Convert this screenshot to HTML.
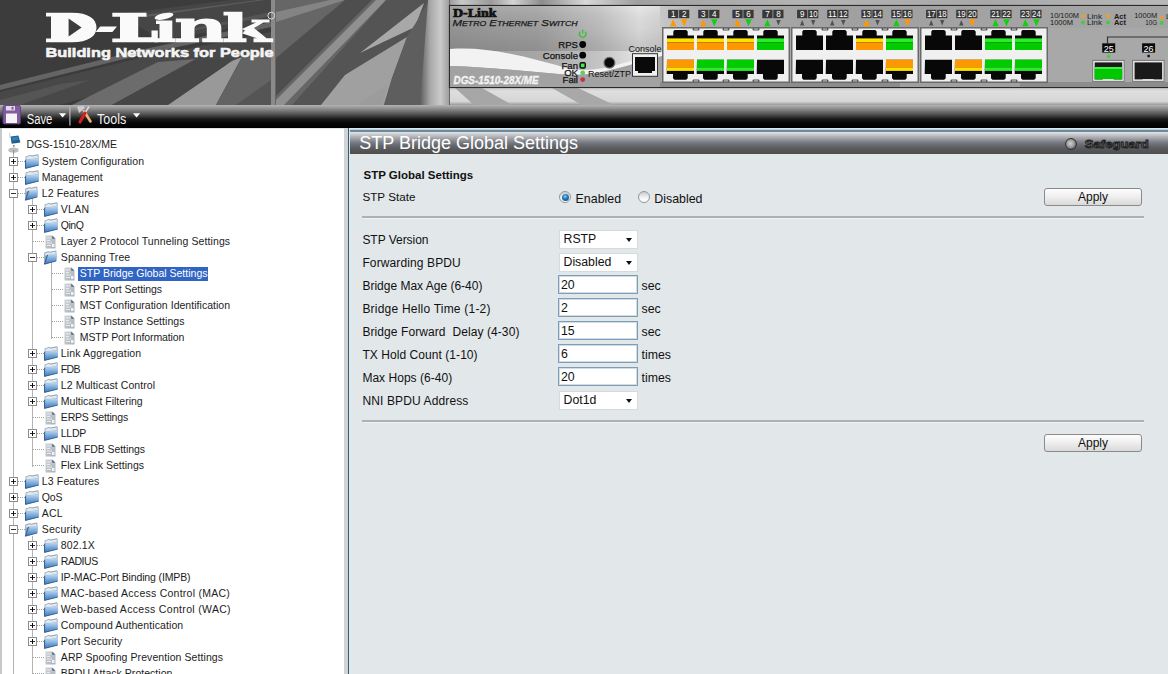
<!DOCTYPE html><html><head><meta charset="utf-8"><style>
*{box-sizing:border-box}
html,body{margin:0;padding:0;width:1168px;height:674px;overflow:hidden;background:#fff;font-family:"Liberation Sans",sans-serif}
.abs{position:absolute}
.t{position:absolute;white-space:nowrap}
#hdr{position:absolute;left:0;top:0;width:1168px;height:105px;background:#4a4a4a;overflow:hidden}
#tb{position:absolute;left:0;top:105px;width:1168px;height:23px;background:linear-gradient(#b4b4b4 0,#8a8a8a 4px,#555 9px,#1a1a1a 14px,#060606 18px,#000 23px)}
#tree{position:absolute;left:0;top:128px;width:344px;height:546px;background:#fff;overflow:hidden}
#gap{position:absolute;left:344px;top:128px;width:4px;height:546px;background:#cfd4d4}
#cont{position:absolute;left:348px;top:128px;width:820px;height:546px;background:#e2e7ea}
.lbl{font-size:12px;line-height:12px;color:#222}
.sel{position:absolute;width:79px;height:19px;background:#fff;border:1px solid #d6dadd;font-size:12.3px;line-height:17px;padding-left:4px;color:#111}
.sel:after{content:"";position:absolute;left:66.5px;top:7.5px;border-left:3.5px solid transparent;border-right:3.5px solid transparent;border-top:4.5px solid #111}
.inp{position:absolute;width:80px;height:19px;background:#fff;border:1px solid #7f9db5;box-shadow:inset 0 0 0 1px #cfdde8;font-size:12.3px;line-height:17px;padding-left:2px;padding-top:1px;color:#111}
.btn{position:absolute;width:98px;height:18px;border:1px solid #8a8a8a;border-radius:3px;background:linear-gradient(#fdfdfd 0,#f0f0f0 45%,#d9d9d9 100%);font-size:12px;line-height:16px;text-align:center;color:#111}
.hr{position:absolute;left:14px;width:782px;height:3px;background:#a9b2b4;border-bottom:1px solid #eef2f3}
.unit{font-size:12.3px;line-height:12px;color:#222}
.tr{font-size:10.5px;line-height:11px;color:#1c1c1c}
</style></head><body>
<div id="hdr"><svg width="1168" height="105" viewBox="0 0 1168 105" style="position:absolute;left:0;top:0"><defs><linearGradient id="pbg" x1="449" y1="0" x2="670" y2="0" gradientUnits="userSpaceOnUse"><stop offset="0" stop-color="#9c9c9c"/><stop offset=".4" stop-color="#a6a6a6"/><stop offset=".68" stop-color="#c4c4c4"/><stop offset=".86" stop-color="#e4e4e4"/><stop offset="1" stop-color="#d4d4d4"/></linearGradient><linearGradient id="pv" x1="0" y1="0" x2="0" y2="1"><stop offset="0" stop-color="#fff" stop-opacity=".1"/><stop offset=".5" stop-color="#000" stop-opacity=".06"/><stop offset="1" stop-color="#000" stop-opacity=".14"/></linearGradient><linearGradient id="ptop" x1="660" y1="0" x2="1050" y2="0" gradientUnits="userSpaceOnUse"><stop offset="0" stop-color="#c8c8c8"/><stop offset=".12" stop-color="#aaaaaa"/><stop offset=".5" stop-color="#a0a0a0"/><stop offset="1" stop-color="#a4a4a4"/></linearGradient><linearGradient id="below" x1="0" y1="0" x2="0" y2="1"><stop offset="0" stop-color="#c8c8c8"/><stop offset=".25" stop-color="#dedede"/><stop offset=".8" stop-color="#d6d6d6"/><stop offset="1" stop-color="#9a9a9a"/></linearGradient><linearGradient id="vband" x1="0" y1="0" x2="1" y2="0"><stop offset="0" stop-color="#5e5e5e"/><stop offset=".35" stop-color="#a8a8a8"/><stop offset=".7" stop-color="#cacaca"/><stop offset="1" stop-color="#a0a0a0"/></linearGradient><linearGradient id="topstrip" x1="440" y1="0" x2="1168" y2="0" gradientUnits="userSpaceOnUse"><stop offset="0" stop-color="#7a7a7a"/><stop offset=".03" stop-color="#c8c8c8"/><stop offset=".07" stop-color="#9a9a9a"/><stop offset=".1" stop-color="#d4d4d4"/><stop offset=".14" stop-color="#8c8c8c"/><stop offset=".2" stop-color="#d8d8d8"/><stop offset=".27" stop-color="#a0a0a0"/><stop offset=".5" stop-color="#b4b4b4"/><stop offset=".75" stop-color="#a8a8a8"/><stop offset="1" stop-color="#b8b8b8"/></linearGradient></defs><rect x="0" y="0" width="1168" height="105" fill="#3c3c3c"/><polygon points="120,14 230,0 271,0 271,22 160,40" fill="#464646"/><polygon points="144,15 257,0 265,0 146,17" fill="#5c5c5c"/><polygon points="180,31 271,12 271,16 182,33" fill="#555"/><polygon points="0,92 140,58 271,32 271,56 140,82 60,105 0,105" fill="#484848"/><polygon points="0,85 140,50 271,22 271,27 140,55 0,90" fill="#646464"/><polygon points="0,100 60,84 90,80 20,105 0,105" fill="#555"/><polygon points="72,105 158,62 196,59 112,105" fill="#6c6c6c"/><polygon points="112,105 196,59 232,60 168,105" fill="#464646"/><polygon points="168,105 232,61 242,57 216,105" fill="#999"/><polygon points="216,105 242,57 271,49 271,105" fill="#636363"/><polygon points="236,105 271,80 271,105" fill="#555"/><rect x="274" y="0" width="176" height="105" fill="#666"/><polygon points="276,12 330,0 345,0 276,22" fill="#848484"/><polygon points="276,58 345,0 372,0 276,96" fill="#4e4e4e"/><polygon points="276,100 376,0 386,0 284,105 276,105" fill="#909090"/><polygon points="292,105 386,0 430,0 407,37 345,75 321,105" fill="#545454"/><polygon points="360,53 424,3 415,27" fill="#a8a8a8"/><polygon points="321,105 345,75 407,37 392,78 384,105" fill="#a0a0a0"/><polygon points="357,105 388,84 382,105" fill="#9c9c9c"/><polygon points="407,37 430,0 436,0 432,105 384,105 392,78" fill="#5e5e5e"/><polygon points="428,0 449,0 449,105 420,105" fill="url(#vband)"/><rect x="271" y="0" width="4" height="105" fill="#8a8a8a"/><rect x="450" y="0" width="718" height="6" fill="url(#topstrip)"/><rect x="450" y="87" width="718" height="18" fill="url(#below)"/><polygon points="455,88 482,88 512,105 474,105" fill="#a6a6a6"/><polygon points="552,88 578,88 614,105 582,105" fill="#a8a8a8"/><g fill="#fafafa"><path fill-rule="evenodd" d="M46,12.8 H72 C88.5,12.8 96.5,19 96.5,27.5 C96.5,36 88.5,42.3 72,42.3 H46 V38.6 H51 V16.6 H46 Z M68.6,18.6 L81.6,27.5 L68.6,36.4 Z"/><polygon points="95.6,31.9 100.2,26.6 117,26.6 112.4,31.9"/><path d="M112.3,12.8 H146.5 V16.7 H138.2 V37.3 H151.5 V30.6 H157.8 V42.3 H112.3 V38.5 H120 V16.7 H112.3 Z"/><ellipse cx="164" cy="16.3" rx="9.6" ry="3.1" transform="rotate(-12 164 16.3)"/><path d="M156,20.6 H172.3 V38.2 H175.6 V42.3 H154.5 V38.2 H159.5 V24 H156 Z"/><path d="M175.8,18.4 H194.5 V21.4 C197.5,19.3 201.5,18.4 206.5,18.4 C216,18.4 221.3,21.5 221.3,27.5 V38.2 H223.5 V42.3 H202.2 V38.2 H206.8 V28.4 C206.8,25.3 205,23.8 202,23.8 C198,23.8 194.5,25.5 194.5,28.6 V38.2 H199 V42.3 H175.6 V38.2 H181 V22.2 H175.8 Z"/><path d="M223.5,11.7 H242.4 V38.2 H246.5 V42.3 H223.5 V38.2 H228 V15.6 H223.5 Z"/><polygon points="242,29 256,22.6 251.5,22.6 251.5,19.5 269.5,19.5 269.5,22.6 263.5,22.6 247.5,31.5"/><polygon points="245.5,30 252.5,26.8 266.5,38.2 273.2,38.2 273.2,42.3 253.5,42.3 253.5,38.2 257,38.2 242.4,33.5"/></g><text x="45.5" y="56.8" font-family="Liberation Sans" font-weight="bold" font-size="13.5" fill="#f4f4f4" stroke="#f4f4f4" stroke-width=".6" textLength="228" lengthAdjust="spacingAndGlyphs">Building Networks for People</text><circle cx="271.3" cy="15.6" r="3.4" fill="none" stroke="#d8d8d8" stroke-width="1"/><rect x="449.5" y="5.5" width="730" height="82" fill="#a8a8a8" stroke="#2a2a2a" stroke-width="1.2"/><rect x="450" y="6" width="212" height="81" fill="url(#pbg)"/><rect x="450" y="6" width="212" height="45" fill="url(#pv)"/><path d="M450,49 C490,46 530,58 570,69 C600,74 630,60 662,52 L662,56 C630,64 600,76 570,75 C530,72 490,67 450,66 Z" fill="#f2f2f2"/><path d="M450,66 C490,67 530,72 570,75 C600,76 630,64 662,56 L662,87 L450,87 Z" fill="#a2a2a2"/><rect x="660" y="6" width="520" height="22" fill="url(#ptop)"/><rect x="660" y="82" width="520" height="5" fill="#8c8c8c"/><rect x="900" y="82" width="120" height="5" fill="#a8a8a8" opacity=".7"/><text x="453" y="17" font-family="Liberation Serif" font-weight="bold" font-size="11.5" fill="#111" stroke="#111" stroke-width=".7" textLength="43.5" lengthAdjust="spacingAndGlyphs">D-Link</text><text x="452.5" y="26.4" font-family="Liberation Sans" font-style="italic" font-size="9.2" fill="#1a1a1a" stroke="#1a1a1a" stroke-width=".25" textLength="125" lengthAdjust="spacingAndGlyphs">M<tspan font-size="7">ETRO</tspan> E<tspan font-size="7">THERNET</tspan> S<tspan font-size="7">WITCH</tspan></text><text x="453.5" y="84.4" font-family="Liberation Sans" font-style="italic" font-weight="bold" font-size="10.2" fill="#f4f4f4" stroke="#f4f4f4" stroke-width=".3" textLength="85" lengthAdjust="spacingAndGlyphs">DGS-1510-28X/ME</text><text x="578" y="47.9" font-family="Liberation Sans" font-size="9.6" fill="#111" stroke="#111" stroke-width=".25" text-anchor="end">RPS</text><text x="578" y="58.5" font-family="Liberation Sans" font-size="9.6" fill="#111" stroke="#111" stroke-width=".25" text-anchor="end">Console</text><text x="578" y="68.7" font-family="Liberation Sans" font-size="9.6" fill="#111" stroke="#111" stroke-width=".25" text-anchor="end">Fan</text><text x="578" y="75.89999999999999" font-family="Liberation Sans" font-size="9.6" fill="#111" stroke="#111" stroke-width=".25" text-anchor="end">OK</text><text x="578" y="82.89999999999999" font-family="Liberation Sans" font-size="9.6" fill="#111" stroke="#111" stroke-width=".25" text-anchor="end">Fail</text><circle cx="582.7" cy="44.5" r="3.4" fill="#050505"/><circle cx="582.7" cy="55.2" r="3.4" fill="#050505"/><rect x="579.4" y="62.1" width="6.6" height="6.6" rx="2" fill="#111"/><rect x="580.9" y="63.6" width="3.6" height="3.6" fill="#3cf03c"/><circle cx="582.7" cy="72.8" r="2.4" fill="#5cd05c"/><circle cx="582.7" cy="79.6" r="2.4" fill="#c83048"/><path d="M580.3,31.6 A3.3,3.3 0 1 0 585.1,31.6" fill="none" stroke="#3cc03c" stroke-width="1.3"/><path d="M582.7,29.4 V33.6" stroke="#3cc03c" stroke-width="1.3"/><circle cx="609.4" cy="62.7" r="5.4" fill="#0a0a0a" stroke="#6a6a6a" stroke-width="1.2"/><text x="588" y="76.5" font-family="Liberation Sans" font-size="9.5" fill="#111" textLength="43" lengthAdjust="spacingAndGlyphs">Reset/ZTP</text><text x="628.6" y="51.5" font-family="Liberation Sans" font-size="9.5" fill="#111" textLength="33" lengthAdjust="spacingAndGlyphs">Console</text><rect x="632.5" y="53.7" width="25" height="22.6" fill="#f0f0f0" stroke="#333" stroke-width="1"/><path d="M635,57 h20 v14 h-3 v2 h-14 v-2 h-3 z" fill="#0a0a0a"/><rect x="662.75" y="27.75" width="126.5" height="54.5" fill="#f0f0f0" stroke="#6a6a6a" stroke-width="1.5"/><path d="M674.5,29.9 h11.7 l1.5,1.5 v4.1 h6.3 v14.5 h-27 v-14.5 h6.3 v-4.1 z" fill="#080808"/><rect x="667" y="38.4" width="27" height="4" fill="#ffe200"/><rect x="667" y="42.4" width="27" height="7.6" fill="#ff9800"/><path d="M667,59.7 h27 v14.3 h-6.3 v4.3 l-1.5,1.5 h-11.7 l-1.5,-1.5 v-4.3 h-6.3 z" fill="#080808"/><rect x="667" y="59.7" width="27" height="7.6" fill="#ff9800"/><rect x="667" y="67.3" width="27" height="3.6" fill="#ffe200"/><rect x="692.5" y="28" width="7" height="2.4" rx="1" fill="#555"/><rect x="694" y="28.5" width="4" height="1.2" fill="#bbb"/><rect x="692.5" y="79.6" width="7" height="2.4" rx="1" fill="#555"/><rect x="694" y="80.3" width="4" height="1.2" fill="#bbb"/><rect x="668.1" y="9.8" width="10.2" height="8.4" fill="#383838"/><text x="673.2" y="17.4" font-family="Liberation Sans" font-size="9.5" fill="#fff" text-anchor="middle" textLength="4.5" lengthAdjust="spacingAndGlyphs">1</text><polygon points="670.0,26.3 676.4,26.3 673.2,19.3" fill="#ff9800"/><rect x="679.1" y="9.8" width="10.2" height="8.4" fill="#383838"/><text x="684.2" y="17.4" font-family="Liberation Sans" font-size="9.5" fill="#fff" text-anchor="middle" textLength="4.5" lengthAdjust="spacingAndGlyphs">2</text><polygon points="681.0,19.3 687.4,19.3 684.2,26.3" fill="#ff9800"/><path d="M704.5,29.9 h11.7 l1.5,1.5 v4.1 h6.3 v14.5 h-27 v-14.5 h6.3 v-4.1 z" fill="#080808"/><rect x="697" y="38.4" width="27" height="4" fill="#ffe200"/><rect x="697" y="42.4" width="27" height="7.6" fill="#ff9800"/><path d="M697,59.7 h27 v14.3 h-6.3 v4.3 l-1.5,1.5 h-11.7 l-1.5,-1.5 v-4.3 h-6.3 z" fill="#080808"/><rect x="697" y="59.7" width="27" height="7.6" fill="#00cc00"/><rect x="697" y="67.3" width="27" height="3.6" fill="#2aee2a"/><rect x="722.5" y="28" width="7" height="2.4" rx="1" fill="#555"/><rect x="724" y="28.5" width="4" height="1.2" fill="#bbb"/><rect x="722.5" y="79.6" width="7" height="2.4" rx="1" fill="#555"/><rect x="724" y="80.3" width="4" height="1.2" fill="#bbb"/><rect x="698.2" y="9.8" width="10.2" height="8.4" fill="#383838"/><text x="703.3" y="17.4" font-family="Liberation Sans" font-size="9.5" fill="#fff" text-anchor="middle" textLength="4.5" lengthAdjust="spacingAndGlyphs">3</text><polygon points="700.1,26.3 706.5,26.3 703.3,19.3" fill="#ff9800"/><rect x="709.2" y="9.8" width="10.2" height="8.4" fill="#383838"/><text x="714.3" y="17.4" font-family="Liberation Sans" font-size="9.5" fill="#fff" text-anchor="middle" textLength="4.5" lengthAdjust="spacingAndGlyphs">4</text><polygon points="711.1,19.3 717.5,19.3 714.3,26.3" fill="#10d010"/><path d="M734.5,29.9 h11.7 l1.5,1.5 v4.1 h6.3 v14.5 h-27 v-14.5 h6.3 v-4.1 z" fill="#080808"/><rect x="727" y="38.4" width="27" height="4" fill="#ffe200"/><rect x="727" y="42.4" width="27" height="7.6" fill="#ff9800"/><path d="M727,59.7 h27 v14.3 h-6.3 v4.3 l-1.5,1.5 h-11.7 l-1.5,-1.5 v-4.3 h-6.3 z" fill="#080808"/><rect x="727" y="59.7" width="27" height="7.6" fill="#00cc00"/><rect x="727" y="67.3" width="27" height="3.6" fill="#2aee2a"/><rect x="752.5" y="28" width="7" height="2.4" rx="1" fill="#555"/><rect x="754" y="28.5" width="4" height="1.2" fill="#bbb"/><rect x="752.5" y="79.6" width="7" height="2.4" rx="1" fill="#555"/><rect x="754" y="80.3" width="4" height="1.2" fill="#bbb"/><rect x="732.4" y="9.8" width="10.2" height="8.4" fill="#383838"/><text x="737.5" y="17.4" font-family="Liberation Sans" font-size="9.5" fill="#fff" text-anchor="middle" textLength="4.5" lengthAdjust="spacingAndGlyphs">5</text><polygon points="734.3,26.3 740.7,26.3 737.5,19.3" fill="#ff9800"/><rect x="743.4" y="9.8" width="10.2" height="8.4" fill="#383838"/><text x="748.5" y="17.4" font-family="Liberation Sans" font-size="9.5" fill="#fff" text-anchor="middle" textLength="4.5" lengthAdjust="spacingAndGlyphs">6</text><polygon points="745.3,19.3 751.7,19.3 748.5,26.3" fill="#10d010"/><path d="M764.5,29.9 h11.7 l1.5,1.5 v4.1 h6.3 v14.5 h-27 v-14.5 h6.3 v-4.1 z" fill="#080808"/><rect x="757" y="38.4" width="27" height="4" fill="#2aee2a"/><rect x="757" y="42.4" width="27" height="7.6" fill="#00cc00"/><path d="M757,59.7 h27 v14.3 h-6.3 v4.3 l-1.5,1.5 h-11.7 l-1.5,-1.5 v-4.3 h-6.3 z" fill="#080808"/><rect x="762.3" y="9.8" width="10.2" height="8.4" fill="#383838"/><text x="767.4" y="17.4" font-family="Liberation Sans" font-size="9.5" fill="#fff" text-anchor="middle" textLength="4.5" lengthAdjust="spacingAndGlyphs">7</text><polygon points="764.2,26.3 770.6,26.3 767.4,19.3" fill="#10d010"/><rect x="773.3" y="9.8" width="10.2" height="8.4" fill="#383838"/><text x="778.4" y="17.4" font-family="Liberation Sans" font-size="9.5" fill="#fff" text-anchor="middle" textLength="4.5" lengthAdjust="spacingAndGlyphs">8</text><polygon points="776.2,20 780.6,20 778.4,25.4" fill="#505050"/><rect x="791.75" y="27.75" width="126.5" height="54.5" fill="#f0f0f0" stroke="#6a6a6a" stroke-width="1.5"/><path d="M803.5,29.9 h11.7 l1.5,1.5 v4.1 h6.3 v14.5 h-27 v-14.5 h6.3 v-4.1 z" fill="#080808"/><path d="M796,59.7 h27 v14.3 h-6.3 v4.3 l-1.5,1.5 h-11.7 l-1.5,-1.5 v-4.3 h-6.3 z" fill="#080808"/><rect x="821.5" y="28" width="7" height="2.4" rx="1" fill="#555"/><rect x="823" y="28.5" width="4" height="1.2" fill="#bbb"/><rect x="821.5" y="79.6" width="7" height="2.4" rx="1" fill="#555"/><rect x="823" y="80.3" width="4" height="1.2" fill="#bbb"/><rect x="797.1" y="9.8" width="10.2" height="8.4" fill="#383838"/><text x="802.2" y="17.4" font-family="Liberation Sans" font-size="9.5" fill="#fff" text-anchor="middle" textLength="4.5" lengthAdjust="spacingAndGlyphs">9</text><polygon points="800.0,25.4 804.4,25.4 802.2,20" fill="#505050"/><rect x="808.1" y="9.8" width="10.2" height="8.4" fill="#383838"/><text x="813.2" y="17.4" font-family="Liberation Sans" font-size="9.5" fill="#fff" text-anchor="middle" textLength="8.6" lengthAdjust="spacingAndGlyphs">10</text><polygon points="811.0,20 815.4,20 813.2,25.4" fill="#505050"/><path d="M833.5,29.9 h11.7 l1.5,1.5 v4.1 h6.3 v14.5 h-27 v-14.5 h6.3 v-4.1 z" fill="#080808"/><path d="M826,59.7 h27 v14.3 h-6.3 v4.3 l-1.5,1.5 h-11.7 l-1.5,-1.5 v-4.3 h-6.3 z" fill="#080808"/><rect x="851.5" y="28" width="7" height="2.4" rx="1" fill="#555"/><rect x="853" y="28.5" width="4" height="1.2" fill="#bbb"/><rect x="851.5" y="79.6" width="7" height="2.4" rx="1" fill="#555"/><rect x="853" y="80.3" width="4" height="1.2" fill="#bbb"/><rect x="827.2" y="9.8" width="10.2" height="8.4" fill="#383838"/><text x="832.3" y="17.4" font-family="Liberation Sans" font-size="9.5" fill="#fff" text-anchor="middle" textLength="8.6" lengthAdjust="spacingAndGlyphs">11</text><polygon points="830.1,25.4 834.5,25.4 832.3,20" fill="#505050"/><rect x="838.2" y="9.8" width="10.2" height="8.4" fill="#383838"/><text x="843.3" y="17.4" font-family="Liberation Sans" font-size="9.5" fill="#fff" text-anchor="middle" textLength="8.6" lengthAdjust="spacingAndGlyphs">12</text><polygon points="841.1,20 845.5,20 843.3,25.4" fill="#505050"/><path d="M863.5,29.9 h11.7 l1.5,1.5 v4.1 h6.3 v14.5 h-27 v-14.5 h6.3 v-4.1 z" fill="#080808"/><rect x="856" y="38.4" width="27" height="4" fill="#ffe200"/><rect x="856" y="42.4" width="27" height="7.6" fill="#ff9800"/><path d="M856,59.7 h27 v14.3 h-6.3 v4.3 l-1.5,1.5 h-11.7 l-1.5,-1.5 v-4.3 h-6.3 z" fill="#080808"/><rect x="881.5" y="28" width="7" height="2.4" rx="1" fill="#555"/><rect x="883" y="28.5" width="4" height="1.2" fill="#bbb"/><rect x="881.5" y="79.6" width="7" height="2.4" rx="1" fill="#555"/><rect x="883" y="80.3" width="4" height="1.2" fill="#bbb"/><rect x="861.4" y="9.8" width="10.2" height="8.4" fill="#383838"/><text x="866.5" y="17.4" font-family="Liberation Sans" font-size="9.5" fill="#fff" text-anchor="middle" textLength="8.6" lengthAdjust="spacingAndGlyphs">13</text><polygon points="863.3,26.3 869.7,26.3 866.5,19.3" fill="#ff9800"/><rect x="872.4" y="9.8" width="10.2" height="8.4" fill="#383838"/><text x="877.5" y="17.4" font-family="Liberation Sans" font-size="9.5" fill="#fff" text-anchor="middle" textLength="8.6" lengthAdjust="spacingAndGlyphs">14</text><polygon points="875.3,20 879.7,20 877.5,25.4" fill="#505050"/><path d="M893.5,29.9 h11.7 l1.5,1.5 v4.1 h6.3 v14.5 h-27 v-14.5 h6.3 v-4.1 z" fill="#080808"/><rect x="886" y="38.4" width="27" height="4" fill="#2aee2a"/><rect x="886" y="42.4" width="27" height="7.6" fill="#00cc00"/><path d="M886,59.7 h27 v14.3 h-6.3 v4.3 l-1.5,1.5 h-11.7 l-1.5,-1.5 v-4.3 h-6.3 z" fill="#080808"/><rect x="886" y="59.7" width="27" height="7.6" fill="#ff9800"/><rect x="886" y="67.3" width="27" height="3.6" fill="#ffe200"/><rect x="891.3" y="9.8" width="10.2" height="8.4" fill="#383838"/><text x="896.4" y="17.4" font-family="Liberation Sans" font-size="9.5" fill="#fff" text-anchor="middle" textLength="8.6" lengthAdjust="spacingAndGlyphs">15</text><polygon points="893.2,26.3 899.6,26.3 896.4,19.3" fill="#10d010"/><rect x="902.3" y="9.8" width="10.2" height="8.4" fill="#383838"/><text x="907.4" y="17.4" font-family="Liberation Sans" font-size="9.5" fill="#fff" text-anchor="middle" textLength="8.6" lengthAdjust="spacingAndGlyphs">16</text><polygon points="904.2,19.3 910.6,19.3 907.4,26.3" fill="#ff9800"/><rect x="920.75" y="27.75" width="126.5" height="54.5" fill="#f0f0f0" stroke="#6a6a6a" stroke-width="1.5"/><path d="M932.5,29.9 h11.7 l1.5,1.5 v4.1 h6.3 v14.5 h-27 v-14.5 h6.3 v-4.1 z" fill="#080808"/><path d="M925,59.7 h27 v14.3 h-6.3 v4.3 l-1.5,1.5 h-11.7 l-1.5,-1.5 v-4.3 h-6.3 z" fill="#080808"/><rect x="950.5" y="28" width="7" height="2.4" rx="1" fill="#555"/><rect x="952" y="28.5" width="4" height="1.2" fill="#bbb"/><rect x="950.5" y="79.6" width="7" height="2.4" rx="1" fill="#555"/><rect x="952" y="80.3" width="4" height="1.2" fill="#bbb"/><rect x="926.1" y="9.8" width="10.2" height="8.4" fill="#383838"/><text x="931.2" y="17.4" font-family="Liberation Sans" font-size="9.5" fill="#fff" text-anchor="middle" textLength="8.6" lengthAdjust="spacingAndGlyphs">17</text><polygon points="929.0,25.4 933.4,25.4 931.2,20" fill="#505050"/><rect x="937.1" y="9.8" width="10.2" height="8.4" fill="#383838"/><text x="942.2" y="17.4" font-family="Liberation Sans" font-size="9.5" fill="#fff" text-anchor="middle" textLength="8.6" lengthAdjust="spacingAndGlyphs">18</text><polygon points="940.0,20 944.4,20 942.2,25.4" fill="#505050"/><path d="M962.5,29.9 h11.7 l1.5,1.5 v4.1 h6.3 v14.5 h-27 v-14.5 h6.3 v-4.1 z" fill="#080808"/><path d="M955,59.7 h27 v14.3 h-6.3 v4.3 l-1.5,1.5 h-11.7 l-1.5,-1.5 v-4.3 h-6.3 z" fill="#080808"/><rect x="955" y="59.7" width="27" height="7.6" fill="#ff9800"/><rect x="955" y="67.3" width="27" height="3.6" fill="#ffe200"/><rect x="980.5" y="28" width="7" height="2.4" rx="1" fill="#555"/><rect x="982" y="28.5" width="4" height="1.2" fill="#bbb"/><rect x="980.5" y="79.6" width="7" height="2.4" rx="1" fill="#555"/><rect x="982" y="80.3" width="4" height="1.2" fill="#bbb"/><rect x="956.2" y="9.8" width="10.2" height="8.4" fill="#383838"/><text x="961.3" y="17.4" font-family="Liberation Sans" font-size="9.5" fill="#fff" text-anchor="middle" textLength="8.6" lengthAdjust="spacingAndGlyphs">19</text><polygon points="959.1,25.4 963.5,25.4 961.3,20" fill="#505050"/><rect x="967.2" y="9.8" width="10.2" height="8.4" fill="#383838"/><text x="972.3" y="17.4" font-family="Liberation Sans" font-size="9.5" fill="#fff" text-anchor="middle" textLength="8.6" lengthAdjust="spacingAndGlyphs">20</text><polygon points="969.1,19.3 975.5,19.3 972.3,26.3" fill="#ff9800"/><path d="M992.5,29.9 h11.7 l1.5,1.5 v4.1 h6.3 v14.5 h-27 v-14.5 h6.3 v-4.1 z" fill="#080808"/><rect x="985" y="38.4" width="27" height="4" fill="#2aee2a"/><rect x="985" y="42.4" width="27" height="7.6" fill="#00cc00"/><path d="M985,59.7 h27 v14.3 h-6.3 v4.3 l-1.5,1.5 h-11.7 l-1.5,-1.5 v-4.3 h-6.3 z" fill="#080808"/><rect x="985" y="59.7" width="27" height="7.6" fill="#00cc00"/><rect x="985" y="67.3" width="27" height="3.6" fill="#2aee2a"/><rect x="1010.5" y="28" width="7" height="2.4" rx="1" fill="#555"/><rect x="1012" y="28.5" width="4" height="1.2" fill="#bbb"/><rect x="1010.5" y="79.6" width="7" height="2.4" rx="1" fill="#555"/><rect x="1012" y="80.3" width="4" height="1.2" fill="#bbb"/><rect x="990.4" y="9.8" width="10.2" height="8.4" fill="#383838"/><text x="995.5" y="17.4" font-family="Liberation Sans" font-size="9.5" fill="#fff" text-anchor="middle" textLength="8.6" lengthAdjust="spacingAndGlyphs">21</text><polygon points="992.3,26.3 998.7,26.3 995.5,19.3" fill="#10d010"/><rect x="1001.4" y="9.8" width="10.2" height="8.4" fill="#383838"/><text x="1006.5" y="17.4" font-family="Liberation Sans" font-size="9.5" fill="#fff" text-anchor="middle" textLength="8.6" lengthAdjust="spacingAndGlyphs">22</text><polygon points="1003.3,19.3 1009.7,19.3 1006.5,26.3" fill="#10d010"/><path d="M1022.5,29.9 h11.7 l1.5,1.5 v4.1 h6.3 v14.5 h-27 v-14.5 h6.3 v-4.1 z" fill="#080808"/><rect x="1015" y="38.4" width="27" height="4" fill="#2aee2a"/><rect x="1015" y="42.4" width="27" height="7.6" fill="#00cc00"/><path d="M1015,59.7 h27 v14.3 h-6.3 v4.3 l-1.5,1.5 h-11.7 l-1.5,-1.5 v-4.3 h-6.3 z" fill="#080808"/><rect x="1015" y="59.7" width="27" height="7.6" fill="#00cc00"/><rect x="1015" y="67.3" width="27" height="3.6" fill="#2aee2a"/><rect x="1020.3" y="9.8" width="10.2" height="8.4" fill="#383838"/><text x="1025.4" y="17.4" font-family="Liberation Sans" font-size="9.5" fill="#fff" text-anchor="middle" textLength="8.6" lengthAdjust="spacingAndGlyphs">23</text><polygon points="1022.2,26.3 1028.6,26.3 1025.4,19.3" fill="#10d010"/><rect x="1031.3" y="9.8" width="10.2" height="8.4" fill="#383838"/><text x="1036.4" y="17.4" font-family="Liberation Sans" font-size="9.5" fill="#fff" text-anchor="middle" textLength="8.6" lengthAdjust="spacingAndGlyphs">24</text><polygon points="1033.2,19.3 1039.6,19.3 1036.4,26.3" fill="#10d010"/><text x="1050" y="18.4" font-family="Liberation Sans" fill="#1a1a1a" lengthAdjust="spacingAndGlyphs" font-size="6.5" textLength="29">10/100M</text><text x="1050" y="24.8" font-family="Liberation Sans" fill="#1a1a1a" lengthAdjust="spacingAndGlyphs" font-size="6.5" textLength="23">1000M</text><circle cx="1083" cy="16" r="2" fill="#e8a030"/><circle cx="1083" cy="22.5" r="2" fill="#48c848"/><text x="1087" y="18.6" font-family="Liberation Sans" fill="#1a1a1a" lengthAdjust="spacingAndGlyphs" font-size="7.2" textLength="15">Link</text><text x="1087" y="25" font-family="Liberation Sans" fill="#1a1a1a" lengthAdjust="spacingAndGlyphs" font-size="7.2" textLength="15">Link</text><circle cx="1108" cy="16" r="2" fill="#e8a030"/><circle cx="1108" cy="22.5" r="2" fill="#48c848"/><text x="1114" y="18.6" font-family="Liberation Sans" fill="#1a1a1a" lengthAdjust="spacingAndGlyphs" font-size="7.2" font-weight="bold" textLength="12">Act</text><text x="1114" y="25" font-family="Liberation Sans" fill="#1a1a1a" lengthAdjust="spacingAndGlyphs" font-size="7.2" font-weight="bold" textLength="12">Act</text><text x="1134.2" y="18.3" font-family="Liberation Sans" fill="#1a1a1a" lengthAdjust="spacingAndGlyphs" font-size="6.5" textLength="23">1000M</text><text x="1145.2" y="25" font-family="Liberation Sans" fill="#1a1a1a" lengthAdjust="spacingAndGlyphs" font-size="6.5" textLength="12">10G</text><circle cx="1161.6" cy="17.6" r="2" fill="#e8a030"/><circle cx="1161.6" cy="22.9" r="2" fill="#48c848"/><text x="1166" y="19" font-family="Liberation Sans" fill="#1a1a1a" lengthAdjust="spacingAndGlyphs" font-size="7.2">L</text><path d="M1107.5,43 V37 H1168" fill="none" stroke="#333" stroke-width="1.2"/><rect x="1102.2" y="43.3" width="13" height="9.3" fill="#0a0a0a"/><text x="1108.7" y="51.6" font-family="Liberation Sans" font-size="9" fill="#fff" text-anchor="middle">25</text><circle cx="1108.7" cy="56.5" r="1.8" fill="#40d040"/><rect x="1092.7" y="60.4" width="31.5" height="21" fill="#e8e8e8" stroke="#777" stroke-width="1"/><rect x="1094.7" y="62.4" width="27.5" height="17" fill="#1a1a1a"/><rect x="1094.7" y="67" width="27.5" height="2" fill="#40f040"/><rect x="1094.7" y="69" width="27.5" height="10.4" fill="#00c800"/><rect x="1102.7" y="79" width="11" height="1.5" fill="#ddd"/><rect x="1142.1" y="43.3" width="13" height="9.3" fill="#0a0a0a"/><text x="1148.6" y="51.6" font-family="Liberation Sans" font-size="9" fill="#fff" text-anchor="middle">26</text><rect x="1147.3999999999999" y="54.8" width="2.4" height="2.4" fill="#111"/><rect x="1132.6" y="60.4" width="31.5" height="21" fill="#e8e8e8" stroke="#777" stroke-width="1"/><rect x="1134.6" y="62.4" width="27.5" height="17" fill="#1a1a1a"/><rect x="1142.6" y="79" width="11" height="1.5" fill="#ddd"/></svg></div>
<div id="tb"><svg width="200" height="23" style="position:absolute;left:0;top:0"><rect x="3" y="0.5" width="17.5" height="18.5" rx="1.5" fill="#7e5c9e" stroke="#5a3c78" stroke-width=".8"/><rect x="6" y="1" width="9" height="4.5" fill="#e6d8f0"/><rect x="11.5" y="1.8" width="2" height="2.8" fill="#7e5c9e"/><rect x="6" y="8.5" width="11" height="9.5" fill="#f6f2f8"/><text x="26.7" y="18.6" font-family="Liberation Sans" font-size="13.8" fill="#f4f4f4" textLength="25.7" lengthAdjust="spacingAndGlyphs">Save</text><polygon points="59,8.3 66.2,8.3 62.6,12.4" fill="#fff"/><rect x="69.3" y="2" width="1.2" height="18.6" fill="#b8b8b8"/><path d="M77,1.5 L83.5,0.8 L85,3 L79,8 Z" fill="#c8ccd8"/><path d="M84,6 L90.5,16.5" stroke="#e8b878" stroke-width="2.6" stroke-linecap="round"/><path d="M89,1.5 L85,8" stroke="#d8d8e0" stroke-width="1.6"/><path d="M85,8 L80,17" stroke="#d42020" stroke-width="3" stroke-linecap="round"/><text x="97" y="18.8" font-family="Liberation Sans" font-size="13.8" fill="#f4f4f4" textLength="29.2" lengthAdjust="spacingAndGlyphs">Tools</text><polygon points="133,8.3 140.2,8.3 136.6,12.6" fill="#fff"/></svg></div>
<svg width="0" height="0" style="position:absolute"><defs><linearGradient id="gf" x1="0" y1="0" x2="0" y2="1"><stop offset="0" stop-color="#c4daf0"/><stop offset=".45" stop-color="#7eaede"/><stop offset="1" stop-color="#3d72b0"/></linearGradient><linearGradient id="gb" x1="0" y1="0" x2="0" y2="1"><stop offset="0" stop-color="#8a9cac"/><stop offset="1" stop-color="#c8d4de"/></linearGradient><linearGradient id="gd" x1="0" y1="0" x2="1" y2="1"><stop offset="0" stop-color="#d0d4d8"/><stop offset="1" stop-color="#a8b0b8"/></linearGradient><g id="fc"><path d="M0.6,2.4 L5,0.9 L7.2,1.5 L12.8,0.2 L13.6,0.9 L13.6,11.2 L0.6,14.6 Z" fill="#8ea2b6"/><path d="M1.4,2.9 L5,1.8 L7.2,2.4 L12.8,1.2 L12.8,4.2 L1.4,5.5 Z" fill="#dfe8f0"/><path d="M0.6,5.8 L13.6,4.3 L13.6,11.2 L0.6,14.6 Z" fill="url(#gf)"/><path d="M0.6,5.8 L0.6,14.6" stroke="#2e5c90" stroke-width="1"/><path d="M0.6,14.4 L13.6,11.1" stroke="#2e5c90" stroke-width=".8"/></g><g id="fo"><path d="M1.2,2.8 L5.2,1.2 L7.2,1.8 L12.8,0.4 L13.4,1 L13.4,11 L1.2,14.2 Z" fill="#8ea2b6"/><path d="M2,3.4 L5.2,2.2 L7.2,2.8 L12.6,1.6 L12.6,4 L2,5.5 Z" fill="#dfe8f0"/><path d="M1.6,14.2 L4.6,4.8 L14.2,3.6 L13.2,11 Z" fill="url(#gf)"/><path d="M4.6,4.8 L1.4,14.2" stroke="#2e5c90" stroke-width="1"/><path d="M1.4,14.2 L13.2,11" stroke="#2e5c90" stroke-width=".8"/></g><g id="dc"><path d="M0.5,0.5 L7.2,0.5 L10.5,3.8 L10.5,13.5 L0.5,13.5 Z" fill="url(#gd)"/><path d="M7.2,0.5 L7.2,3.8 L10.5,3.8 Z" fill="#58708a"/><path d="M2,3 h4 M2,5.5 h3 M2,8 h5 M2,10.5 h4" stroke="#e8ecef" stroke-width="1"/><rect x="7" y="9" width="2.5" height="3" fill="#fff" opacity=".8"/></g></defs></svg>
<div id="tree">
<div class="abs" style="left:0;top:0;width:2px;height:546px;background:#c8c8c8"></div>
<div class="abs" style="left:2px;top:0;width:342px;height:1px;background:#e0e6e8"></div>
<div class="abs" style="left:13px;top:23px;width:1px;height:523px;background:#b4b4b4"></div>
<div class="abs" style="left:32px;top:70px;width:1px;height:269px;background:#b4b4b4"></div>
<div class="abs" style="left:51px;top:134px;width:1px;height:77px;background:#b4b4b4"></div>
<div class="abs" style="left:32px;top:408px;width:1px;height:138px;background:#b4b4b4"></div>
<svg class="abs" style="left:6px;top:4px" width="18" height="22" viewBox="0 0 18 22"><path d="M3.5,1 L4,6" stroke="#b8c0c8" stroke-width=".8"/><path d="M4.6,4.6 L12.4,3.6 L14.4,10.6 L5.6,11.8 Z" fill="#1e5f8e"/><path d="M5.6,5.4 L11.6,4.6 L12.6,8 L6.4,8.8 Z" fill="#3b86b8" opacity=".8"/><rect x="7" y="13" width="1.6" height="1.6" fill="#777"/><ellipse cx="7.5" cy="18" rx="5.2" ry="2.6" fill="#bdbdbd"/><rect x="7" y="18" width="1.2" height="4" fill="#999"/></svg>
<div class="t tr" style="left:26.5px;top:10.71px">DGS-1510-28X/ME</div>
<div class="abs" style="left:18px;top:33px;width:7px;height:1px;background:repeating-linear-gradient(90deg,#a0a0a0 0,#a0a0a0 1px,transparent 1px,transparent 2px)"></div>
<div class="abs" style="left:9px;top:29px;width:9px;height:9px;border:1px solid #8c8c8c;background:#fff"><div class="abs" style="left:1px;top:3px;width:5px;height:1px;background:#333"></div><div class="abs" style="left:3px;top:1px;width:1px;height:5px;background:#111"></div></div>
<svg class="abs" style="left:25px;top:26px" width="14" height="15"><use href="#fc"/></svg>
<div class="t tr" style="left:41.8px;top:28.11px;letter-spacing:0.100px;">System Configuration</div>
<div class="abs" style="left:18px;top:49px;width:7px;height:1px;background:repeating-linear-gradient(90deg,#a0a0a0 0,#a0a0a0 1px,transparent 1px,transparent 2px)"></div>
<div class="abs" style="left:9px;top:45px;width:9px;height:9px;border:1px solid #8c8c8c;background:#fff"><div class="abs" style="left:1px;top:3px;width:5px;height:1px;background:#333"></div><div class="abs" style="left:3px;top:1px;width:1px;height:5px;background:#111"></div></div>
<svg class="abs" style="left:25px;top:42px" width="14" height="15"><use href="#fc"/></svg>
<div class="t tr" style="left:41.8px;top:44.11px;letter-spacing:-0.033px;">Management</div>
<div class="abs" style="left:18px;top:65px;width:7px;height:1px;background:repeating-linear-gradient(90deg,#a0a0a0 0,#a0a0a0 1px,transparent 1px,transparent 2px)"></div>
<div class="abs" style="left:9px;top:61px;width:9px;height:9px;border:1px solid #8c8c8c;background:#fff"><div class="abs" style="left:1px;top:3px;width:5px;height:1px;background:#333"></div></div>
<svg class="abs" style="left:24px;top:58px" width="15" height="15"><use href="#fo"/></svg>
<div class="t tr" style="left:41.8px;top:60.11px;letter-spacing:0.115px;">L2 Features</div>
<div class="abs" style="left:37px;top:81px;width:7px;height:1px;background:repeating-linear-gradient(90deg,#a0a0a0 0,#a0a0a0 1px,transparent 1px,transparent 2px)"></div>
<div class="abs" style="left:28px;top:77px;width:9px;height:9px;border:1px solid #8c8c8c;background:#fff"><div class="abs" style="left:1px;top:3px;width:5px;height:1px;background:#333"></div><div class="abs" style="left:3px;top:1px;width:1px;height:5px;background:#111"></div></div>
<svg class="abs" style="left:44px;top:74px" width="14" height="15"><use href="#fc"/></svg>
<div class="t tr" style="left:60.8px;top:76.11px;letter-spacing:0.321px;">VLAN</div>
<div class="abs" style="left:37px;top:97px;width:7px;height:1px;background:repeating-linear-gradient(90deg,#a0a0a0 0,#a0a0a0 1px,transparent 1px,transparent 2px)"></div>
<div class="abs" style="left:28px;top:93px;width:9px;height:9px;border:1px solid #8c8c8c;background:#fff"><div class="abs" style="left:1px;top:3px;width:5px;height:1px;background:#333"></div><div class="abs" style="left:3px;top:1px;width:1px;height:5px;background:#111"></div></div>
<svg class="abs" style="left:44px;top:90px" width="14" height="15"><use href="#fc"/></svg>
<div class="t tr" style="left:60.8px;top:92.11px;letter-spacing:-0.472px;">QinQ</div>
<div class="abs" style="left:33px;top:113px;width:11px;height:1px;background:repeating-linear-gradient(90deg,#a0a0a0 0,#a0a0a0 1px,transparent 1px,transparent 2px)"></div>
<svg class="abs" style="left:45px;top:107px" width="11" height="14"><use href="#dc"/></svg>
<div class="t tr" style="left:60.8px;top:108.11px;letter-spacing:0.103px;">Layer 2 Protocol Tunneling Settings</div>
<div class="abs" style="left:37px;top:129px;width:7px;height:1px;background:repeating-linear-gradient(90deg,#a0a0a0 0,#a0a0a0 1px,transparent 1px,transparent 2px)"></div>
<div class="abs" style="left:28px;top:125px;width:9px;height:9px;border:1px solid #8c8c8c;background:#fff"><div class="abs" style="left:1px;top:3px;width:5px;height:1px;background:#333"></div></div>
<svg class="abs" style="left:43px;top:122px" width="15" height="15"><use href="#fo"/></svg>
<div class="t tr" style="left:60.8px;top:124.11px;letter-spacing:0.091px;">Spanning Tree</div>
<div class="abs" style="left:52px;top:145px;width:11px;height:1px;background:repeating-linear-gradient(90deg,#a0a0a0 0,#a0a0a0 1px,transparent 1px,transparent 2px)"></div>
<svg class="abs" style="left:64px;top:139px" width="11" height="14"><use href="#dc"/></svg>
<div class="abs" style="left:78.2px;top:139px;width:130px;height:13.5px;background:#3065c4"></div>
<div class="t tr" style="left:79.8px;top:140.11px;letter-spacing:0.002px;color:#fff">STP Bridge Global Settings</div>
<div class="abs" style="left:52px;top:161px;width:11px;height:1px;background:repeating-linear-gradient(90deg,#a0a0a0 0,#a0a0a0 1px,transparent 1px,transparent 2px)"></div>
<svg class="abs" style="left:64px;top:155px" width="11" height="14"><use href="#dc"/></svg>
<div class="t tr" style="left:79.8px;top:156.11px;letter-spacing:-0.060px;">STP Port Settings</div>
<div class="abs" style="left:52px;top:177px;width:11px;height:1px;background:repeating-linear-gradient(90deg,#a0a0a0 0,#a0a0a0 1px,transparent 1px,transparent 2px)"></div>
<svg class="abs" style="left:64px;top:171px" width="11" height="14"><use href="#dc"/></svg>
<div class="t tr" style="left:79.8px;top:172.11px;letter-spacing:0.034px;">MST Configuration Identification</div>
<div class="abs" style="left:52px;top:193px;width:11px;height:1px;background:repeating-linear-gradient(90deg,#a0a0a0 0,#a0a0a0 1px,transparent 1px,transparent 2px)"></div>
<svg class="abs" style="left:64px;top:187px" width="11" height="14"><use href="#dc"/></svg>
<div class="t tr" style="left:79.8px;top:188.11px;letter-spacing:0.045px;">STP Instance Settings</div>
<div class="abs" style="left:52px;top:209px;width:11px;height:1px;background:repeating-linear-gradient(90deg,#a0a0a0 0,#a0a0a0 1px,transparent 1px,transparent 2px)"></div>
<svg class="abs" style="left:64px;top:203px" width="11" height="14"><use href="#dc"/></svg>
<div class="t tr" style="left:79.8px;top:204.11px;letter-spacing:-0.100px;">MSTP Port Information</div>
<div class="abs" style="left:37px;top:225px;width:7px;height:1px;background:repeating-linear-gradient(90deg,#a0a0a0 0,#a0a0a0 1px,transparent 1px,transparent 2px)"></div>
<div class="abs" style="left:28px;top:221px;width:9px;height:9px;border:1px solid #8c8c8c;background:#fff"><div class="abs" style="left:1px;top:3px;width:5px;height:1px;background:#333"></div><div class="abs" style="left:3px;top:1px;width:1px;height:5px;background:#111"></div></div>
<svg class="abs" style="left:44px;top:218px" width="14" height="15"><use href="#fc"/></svg>
<div class="t tr" style="left:60.8px;top:220.11px;letter-spacing:0.144px;">Link Aggregation</div>
<div class="abs" style="left:37px;top:241px;width:7px;height:1px;background:repeating-linear-gradient(90deg,#a0a0a0 0,#a0a0a0 1px,transparent 1px,transparent 2px)"></div>
<div class="abs" style="left:28px;top:237px;width:9px;height:9px;border:1px solid #8c8c8c;background:#fff"><div class="abs" style="left:1px;top:3px;width:5px;height:1px;background:#333"></div><div class="abs" style="left:3px;top:1px;width:1px;height:5px;background:#111"></div></div>
<svg class="abs" style="left:44px;top:234px" width="14" height="15"><use href="#fc"/></svg>
<div class="t tr" style="left:60.8px;top:236.11px;letter-spacing:-0.650px;">FDB</div>
<div class="abs" style="left:37px;top:257px;width:7px;height:1px;background:repeating-linear-gradient(90deg,#a0a0a0 0,#a0a0a0 1px,transparent 1px,transparent 2px)"></div>
<div class="abs" style="left:28px;top:253px;width:9px;height:9px;border:1px solid #8c8c8c;background:#fff"><div class="abs" style="left:1px;top:3px;width:5px;height:1px;background:#333"></div><div class="abs" style="left:3px;top:1px;width:1px;height:5px;background:#111"></div></div>
<svg class="abs" style="left:44px;top:250px" width="14" height="15"><use href="#fc"/></svg>
<div class="t tr" style="left:60.8px;top:252.11px;letter-spacing:0.079px;">L2 Multicast Control</div>
<div class="abs" style="left:37px;top:273px;width:7px;height:1px;background:repeating-linear-gradient(90deg,#a0a0a0 0,#a0a0a0 1px,transparent 1px,transparent 2px)"></div>
<div class="abs" style="left:28px;top:269px;width:9px;height:9px;border:1px solid #8c8c8c;background:#fff"><div class="abs" style="left:1px;top:3px;width:5px;height:1px;background:#333"></div><div class="abs" style="left:3px;top:1px;width:1px;height:5px;background:#111"></div></div>
<svg class="abs" style="left:44px;top:266px" width="14" height="15"><use href="#fc"/></svg>
<div class="t tr" style="left:60.8px;top:268.11px;letter-spacing:0.011px;">Multicast Filtering</div>
<div class="abs" style="left:33px;top:289px;width:11px;height:1px;background:repeating-linear-gradient(90deg,#a0a0a0 0,#a0a0a0 1px,transparent 1px,transparent 2px)"></div>
<svg class="abs" style="left:45px;top:283px" width="11" height="14"><use href="#dc"/></svg>
<div class="t tr" style="left:60.8px;top:284.11px;letter-spacing:-0.171px;">ERPS Settings</div>
<div class="abs" style="left:37px;top:305px;width:7px;height:1px;background:repeating-linear-gradient(90deg,#a0a0a0 0,#a0a0a0 1px,transparent 1px,transparent 2px)"></div>
<div class="abs" style="left:28px;top:301px;width:9px;height:9px;border:1px solid #8c8c8c;background:#fff"><div class="abs" style="left:1px;top:3px;width:5px;height:1px;background:#333"></div><div class="abs" style="left:3px;top:1px;width:1px;height:5px;background:#111"></div></div>
<svg class="abs" style="left:44px;top:298px" width="14" height="15"><use href="#fc"/></svg>
<div class="t tr" style="left:60.8px;top:300.11px;letter-spacing:-0.289px;">LLDP</div>
<div class="abs" style="left:33px;top:321px;width:11px;height:1px;background:repeating-linear-gradient(90deg,#a0a0a0 0,#a0a0a0 1px,transparent 1px,transparent 2px)"></div>
<svg class="abs" style="left:45px;top:315px" width="11" height="14"><use href="#dc"/></svg>
<div class="t tr" style="left:60.8px;top:316.11px;letter-spacing:-0.067px;">NLB FDB Settings</div>
<div class="abs" style="left:33px;top:337px;width:11px;height:1px;background:repeating-linear-gradient(90deg,#a0a0a0 0,#a0a0a0 1px,transparent 1px,transparent 2px)"></div>
<svg class="abs" style="left:45px;top:331px" width="11" height="14"><use href="#dc"/></svg>
<div class="t tr" style="left:60.8px;top:332.11px;letter-spacing:0.025px;">Flex Link Settings</div>
<div class="abs" style="left:18px;top:353px;width:7px;height:1px;background:repeating-linear-gradient(90deg,#a0a0a0 0,#a0a0a0 1px,transparent 1px,transparent 2px)"></div>
<div class="abs" style="left:9px;top:349px;width:9px;height:9px;border:1px solid #8c8c8c;background:#fff"><div class="abs" style="left:1px;top:3px;width:5px;height:1px;background:#333"></div><div class="abs" style="left:3px;top:1px;width:1px;height:5px;background:#111"></div></div>
<svg class="abs" style="left:25px;top:346px" width="14" height="15"><use href="#fc"/></svg>
<div class="t tr" style="left:41.8px;top:348.11px;letter-spacing:0.145px;">L3 Features</div>
<div class="abs" style="left:18px;top:369px;width:7px;height:1px;background:repeating-linear-gradient(90deg,#a0a0a0 0,#a0a0a0 1px,transparent 1px,transparent 2px)"></div>
<div class="abs" style="left:9px;top:365px;width:9px;height:9px;border:1px solid #8c8c8c;background:#fff"><div class="abs" style="left:1px;top:3px;width:5px;height:1px;background:#333"></div><div class="abs" style="left:3px;top:1px;width:1px;height:5px;background:#111"></div></div>
<svg class="abs" style="left:25px;top:362px" width="14" height="15"><use href="#fc"/></svg>
<div class="t tr" style="left:41.8px;top:364.11px;letter-spacing:-0.158px;">QoS</div>
<div class="abs" style="left:18px;top:385px;width:7px;height:1px;background:repeating-linear-gradient(90deg,#a0a0a0 0,#a0a0a0 1px,transparent 1px,transparent 2px)"></div>
<div class="abs" style="left:9px;top:381px;width:9px;height:9px;border:1px solid #8c8c8c;background:#fff"><div class="abs" style="left:1px;top:3px;width:5px;height:1px;background:#333"></div><div class="abs" style="left:3px;top:1px;width:1px;height:5px;background:#111"></div></div>
<svg class="abs" style="left:25px;top:378px" width="14" height="15"><use href="#fc"/></svg>
<div class="t tr" style="left:41.8px;top:380.11px;letter-spacing:0.131px;">ACL</div>
<div class="abs" style="left:18px;top:401px;width:7px;height:1px;background:repeating-linear-gradient(90deg,#a0a0a0 0,#a0a0a0 1px,transparent 1px,transparent 2px)"></div>
<div class="abs" style="left:9px;top:397px;width:9px;height:9px;border:1px solid #8c8c8c;background:#fff"><div class="abs" style="left:1px;top:3px;width:5px;height:1px;background:#333"></div></div>
<svg class="abs" style="left:24px;top:394px" width="15" height="15"><use href="#fo"/></svg>
<div class="t tr" style="left:41.8px;top:396.11px;letter-spacing:0.223px;">Security</div>
<div class="abs" style="left:37px;top:417px;width:7px;height:1px;background:repeating-linear-gradient(90deg,#a0a0a0 0,#a0a0a0 1px,transparent 1px,transparent 2px)"></div>
<div class="abs" style="left:28px;top:413px;width:9px;height:9px;border:1px solid #8c8c8c;background:#fff"><div class="abs" style="left:1px;top:3px;width:5px;height:1px;background:#333"></div><div class="abs" style="left:3px;top:1px;width:1px;height:5px;background:#111"></div></div>
<svg class="abs" style="left:44px;top:410px" width="14" height="15"><use href="#fc"/></svg>
<div class="t tr" style="left:60.8px;top:412.11px;letter-spacing:0.124px;">802.1X</div>
<div class="abs" style="left:37px;top:433px;width:7px;height:1px;background:repeating-linear-gradient(90deg,#a0a0a0 0,#a0a0a0 1px,transparent 1px,transparent 2px)"></div>
<div class="abs" style="left:28px;top:429px;width:9px;height:9px;border:1px solid #8c8c8c;background:#fff"><div class="abs" style="left:1px;top:3px;width:5px;height:1px;background:#333"></div><div class="abs" style="left:3px;top:1px;width:1px;height:5px;background:#111"></div></div>
<svg class="abs" style="left:44px;top:426px" width="14" height="15"><use href="#fc"/></svg>
<div class="t tr" style="left:60.8px;top:428.11px;letter-spacing:-0.457px;">RADIUS</div>
<div class="abs" style="left:37px;top:449px;width:7px;height:1px;background:repeating-linear-gradient(90deg,#a0a0a0 0,#a0a0a0 1px,transparent 1px,transparent 2px)"></div>
<div class="abs" style="left:28px;top:445px;width:9px;height:9px;border:1px solid #8c8c8c;background:#fff"><div class="abs" style="left:1px;top:3px;width:5px;height:1px;background:#333"></div><div class="abs" style="left:3px;top:1px;width:1px;height:5px;background:#111"></div></div>
<svg class="abs" style="left:44px;top:442px" width="14" height="15"><use href="#fc"/></svg>
<div class="t tr" style="left:60.8px;top:444.11px;letter-spacing:-0.129px;">IP-MAC-Port Binding (IMPB)</div>
<div class="abs" style="left:37px;top:465px;width:7px;height:1px;background:repeating-linear-gradient(90deg,#a0a0a0 0,#a0a0a0 1px,transparent 1px,transparent 2px)"></div>
<div class="abs" style="left:28px;top:461px;width:9px;height:9px;border:1px solid #8c8c8c;background:#fff"><div class="abs" style="left:1px;top:3px;width:5px;height:1px;background:#333"></div><div class="abs" style="left:3px;top:1px;width:1px;height:5px;background:#111"></div></div>
<svg class="abs" style="left:44px;top:458px" width="14" height="15"><use href="#fc"/></svg>
<div class="t tr" style="left:60.8px;top:460.11px;letter-spacing:0.254px;">MAC-based Access Control (MAC)</div>
<div class="abs" style="left:37px;top:481px;width:7px;height:1px;background:repeating-linear-gradient(90deg,#a0a0a0 0,#a0a0a0 1px,transparent 1px,transparent 2px)"></div>
<div class="abs" style="left:28px;top:477px;width:9px;height:9px;border:1px solid #8c8c8c;background:#fff"><div class="abs" style="left:1px;top:3px;width:5px;height:1px;background:#333"></div><div class="abs" style="left:3px;top:1px;width:1px;height:5px;background:#111"></div></div>
<svg class="abs" style="left:44px;top:474px" width="14" height="15"><use href="#fc"/></svg>
<div class="t tr" style="left:60.8px;top:476.11px;letter-spacing:0.322px;">Web-based Access Control (WAC)</div>
<div class="abs" style="left:37px;top:497px;width:7px;height:1px;background:repeating-linear-gradient(90deg,#a0a0a0 0,#a0a0a0 1px,transparent 1px,transparent 2px)"></div>
<div class="abs" style="left:28px;top:493px;width:9px;height:9px;border:1px solid #8c8c8c;background:#fff"><div class="abs" style="left:1px;top:3px;width:5px;height:1px;background:#333"></div><div class="abs" style="left:3px;top:1px;width:1px;height:5px;background:#111"></div></div>
<svg class="abs" style="left:44px;top:490px" width="14" height="15"><use href="#fc"/></svg>
<div class="t tr" style="left:60.8px;top:492.11px;letter-spacing:0.097px;">Compound Authentication</div>
<div class="abs" style="left:37px;top:513px;width:7px;height:1px;background:repeating-linear-gradient(90deg,#a0a0a0 0,#a0a0a0 1px,transparent 1px,transparent 2px)"></div>
<div class="abs" style="left:28px;top:509px;width:9px;height:9px;border:1px solid #8c8c8c;background:#fff"><div class="abs" style="left:1px;top:3px;width:5px;height:1px;background:#333"></div><div class="abs" style="left:3px;top:1px;width:1px;height:5px;background:#111"></div></div>
<svg class="abs" style="left:44px;top:506px" width="14" height="15"><use href="#fc"/></svg>
<div class="t tr" style="left:60.8px;top:508.11px;letter-spacing:0.116px;">Port Security</div>
<div class="abs" style="left:33px;top:529px;width:11px;height:1px;background:repeating-linear-gradient(90deg,#a0a0a0 0,#a0a0a0 1px,transparent 1px,transparent 2px)"></div>
<svg class="abs" style="left:45px;top:523px" width="11" height="14"><use href="#dc"/></svg>
<div class="t tr" style="left:60.8px;top:524.11px;letter-spacing:0.079px;">ARP Spoofing Prevention Settings</div>
<div class="abs" style="left:33px;top:545px;width:11px;height:1px;background:repeating-linear-gradient(90deg,#a0a0a0 0,#a0a0a0 1px,transparent 1px,transparent 2px)"></div>
<svg class="abs" style="left:45px;top:539px" width="11" height="14"><use href="#dc"/></svg>
<div class="t tr" style="left:60.8px;top:540.11px;letter-spacing:0.034px;">BPDU Attack Protection</div>
</div>
<div id="gap"></div>
<div id="cont">
<div class="abs" style="left:0;top:0;width:820px;height:1px;background:#e0e6ea"></div>
<div class="abs" style="left:0;top:1px;width:820px;height:1px;background:#bcd4e0"></div>
<div class="abs" style="left:0;top:2px;width:820px;height:2px;background:#6a8aa0"></div>
<div class="abs" style="left:0;top:4px;width:820px;height:22px;background:linear-gradient(#e2e5e7 0,#cfcfd0 2px,#a4a6ac 6px,#7c7f86 10px,#62656a 14px,#555658 18px,#4e4e4e 22px)"></div>
<div class="abs" style="left:0;top:0;width:1px;height:546px;background:#3c5a6a"></div>
<div class="abs" style="left:1px;top:0;width:1px;height:546px;background:#d8eaf5"></div>
<div class="t" style="left:11.30px;top:6.36px;font-size:18px;line-height:18px;color:#fff">STP Bridge Global Settings</div>
<div class="abs" style="left:717px;top:9.5px;width:12px;height:12px;border-radius:50%;background:radial-gradient(circle at 45% 45%,#d0d0d0 0,#a0a0a0 45%,#505050 80%,#303030 100%);border:1px solid #333"></div>
<svg class="abs" style="left:732px;top:6px" width="80" height="20"><text x="4.8" y="13.7" font-family="Liberation Sans" font-weight="bold" font-size="11.2" fill="#707070" stroke="#1e1e1e" stroke-width=".9" textLength="64" lengthAdjust="spacingAndGlyphs">Safeguard</text></svg>
<div class="t" style="left:15.50px;top:41.97px;font-size:11.5px;line-height:11.5px;font-weight:bold;color:#111">STP Global Settings</div>
<div class="t" style="left:14.40px;top:62.90px;font-size:11.7px;line-height:11.7px;color:#111">STP State</div>
<div class="abs" style="left:211px;top:63px;width:12px;height:12px;border-radius:50%;border:1px solid #8e989c;background:linear-gradient(#c8cdd0,#f4f5f6 60%,#fff)"></div>
<div class="abs" style="left:213.5px;top:65.5px;width:7px;height:7px;border-radius:50%;background:radial-gradient(circle at 45% 35%,#8fd0f8 0,#2a78b8 40%,#0c3f70 100%)"></div>
<div class="t" style="left:227.60px;top:64.90px;font-size:12.4px;line-height:12.4px;color:#111">Enabled</div>
<div class="abs" style="left:290px;top:63px;width:12px;height:12px;border-radius:50%;border:1px solid #8e989c;background:linear-gradient(#c8cdd0,#f4f5f6 60%,#fff)"></div>
<div class="t" style="left:306.30px;top:64.90px;font-size:12.4px;line-height:12.4px;color:#111">Disabled</div>
<div class="btn" style="left:696px;top:60px">Apply</div>
<div class="hr" style="top:88px"></div>
<div class="t" style="left:14.40px;top:105.54px;font-size:12px;line-height:12px;color:#111;letter-spacing:-0.038px">STP Version</div>
<div class="sel" style="left:210.5px;top:101.5px">RSTP</div>
<div class="t" style="left:14.40px;top:128.54px;font-size:12px;line-height:12px;color:#111;letter-spacing:0.121px">Forwarding BPDU</div>
<div class="sel" style="left:210.5px;top:124.5px">Disabled</div>
<div class="t" style="left:14.40px;top:151.54px;font-size:12px;line-height:12px;color:#111;letter-spacing:-0.003px">Bridge Max Age (6-40)</div>
<div class="inp" style="left:210px;top:147.0px">20</div>
<div class="t" style="left:293.50px;top:151.79px;font-size:12.3px;line-height:12.3px;color:#111">sec</div>
<div class="t" style="left:14.40px;top:174.54px;font-size:12px;line-height:12px;color:#111;letter-spacing:0.215px">Bridge Hello Time (1-2)</div>
<div class="inp" style="left:210px;top:170.0px">2</div>
<div class="t" style="left:293.50px;top:174.79px;font-size:12.3px;line-height:12.3px;color:#111">sec</div>
<div class="t" style="left:14.40px;top:197.54px;font-size:12px;line-height:12px;color:#111;letter-spacing:0.084px">Bridge Forward&nbsp; Delay (4-30)</div>
<div class="inp" style="left:210px;top:193.0px">15</div>
<div class="t" style="left:293.50px;top:197.79px;font-size:12.3px;line-height:12.3px;color:#111">sec</div>
<div class="t" style="left:14.40px;top:220.54px;font-size:12px;line-height:12px;color:#111;letter-spacing:0.061px">TX Hold Count (1-10)</div>
<div class="inp" style="left:210px;top:216.0px">6</div>
<div class="t" style="left:293.50px;top:220.79px;font-size:12.3px;line-height:12.3px;color:#111">times</div>
<div class="t" style="left:14.40px;top:243.54px;font-size:12px;line-height:12px;color:#111;letter-spacing:0.030px">Max Hops (6-40)</div>
<div class="inp" style="left:210px;top:239.0px">20</div>
<div class="t" style="left:293.50px;top:243.79px;font-size:12.3px;line-height:12.3px;color:#111">times</div>
<div class="t" style="left:14.40px;top:266.54px;font-size:12px;line-height:12px;color:#111;letter-spacing:0.130px">NNI BPDU Address</div>
<div class="sel" style="left:210.5px;top:262.5px">Dot1d</div>
<div class="hr" style="top:292px"></div>
<div class="btn" style="left:696px;top:305.5px">Apply</div>
</div>
</body></html>
